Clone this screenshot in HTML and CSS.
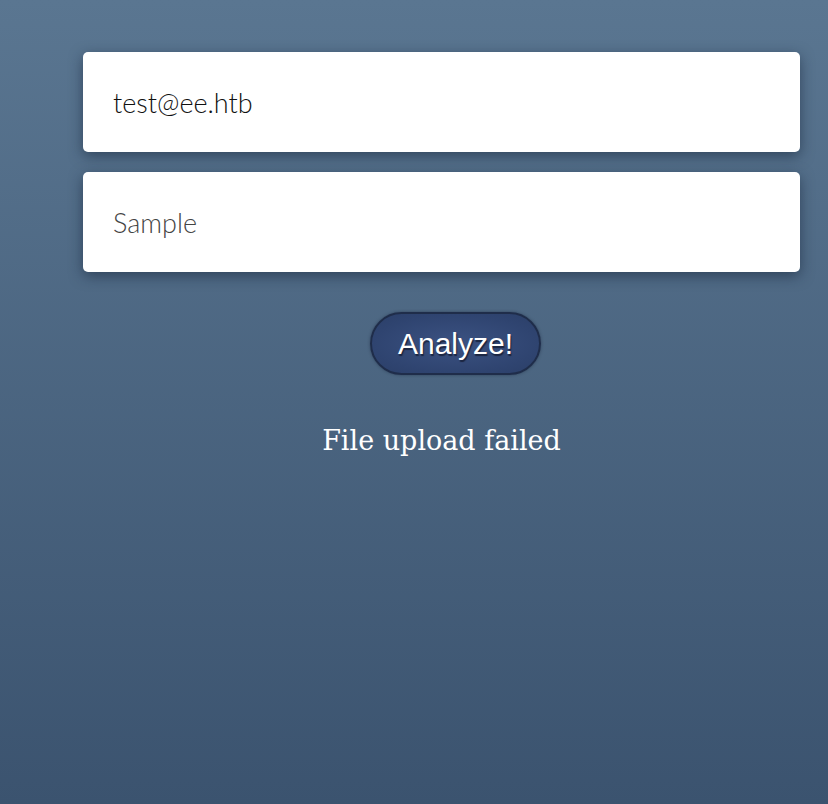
FILE: index.html
```html
<!DOCTYPE html>
<html>
<head>
<meta charset="utf-8">
<link rel="stylesheet" href="styles.css">
</head>
<body>
<main class="wrap">
  <form class="form">
    <div class="field">test@ee.htb</div>
    <div class="field placeholder">Sample</div>
    <button type="button" class="btn">Analyze!</button>
  </form>
  <p class="msg">File upload failed</p>
</main>
</body>
</html>
```

FILE: styles.css
```css
html, body {
  margin: 0;
  padding: 0;
  height: 100%;
}
body {
  background: linear-gradient(to bottom, #5a7691 0%, #3b536f 100%);
  min-height: 804px;
}
.wrap {
  padding: 52px 28px 0 83px;
}
.form {
  display: flex;
  flex-direction: column;
  gap: 20px;
  align-items: center;
}
.field {
  align-self: stretch;
  height: 100px;
  box-sizing: border-box;
  background: #fff;
  border-radius: 5px;
  box-shadow: 0 4px 14px rgba(20, 35, 55, 0.55);
  padding: 0 30px;
  display: flex;
  align-items: center;
  font-family: "Lato", "Open Sans", sans-serif;
  font-weight: 300;
  font-size: 27px;
  color: #111;
}
.field.placeholder {
  color: #444;
}
.btn {
  margin-top: 20px;
  margin-left: 28px;
  width: 171px;
  height: 63px;
  border-radius: 32px;
  border: 2px solid #1f2d4a;
  background: radial-gradient(ellipse at center, #3b5282 0%, #2f4470 70%, #2b3f68 100%);
  box-shadow: 0 0 3px rgba(20, 30, 50, 0.5);
  color: #fff;
  font-family: "Liberation Sans", Arial, sans-serif;
  font-size: 30px;
  text-shadow: 1px 2px 1px #1b2540;
  padding: 0;
}
.msg {
  margin: 50px 0 0;
  text-align: center;
  font-family: "DejaVu Serif", serif;
  font-size: 27px;
  color: #fff;
}
```
